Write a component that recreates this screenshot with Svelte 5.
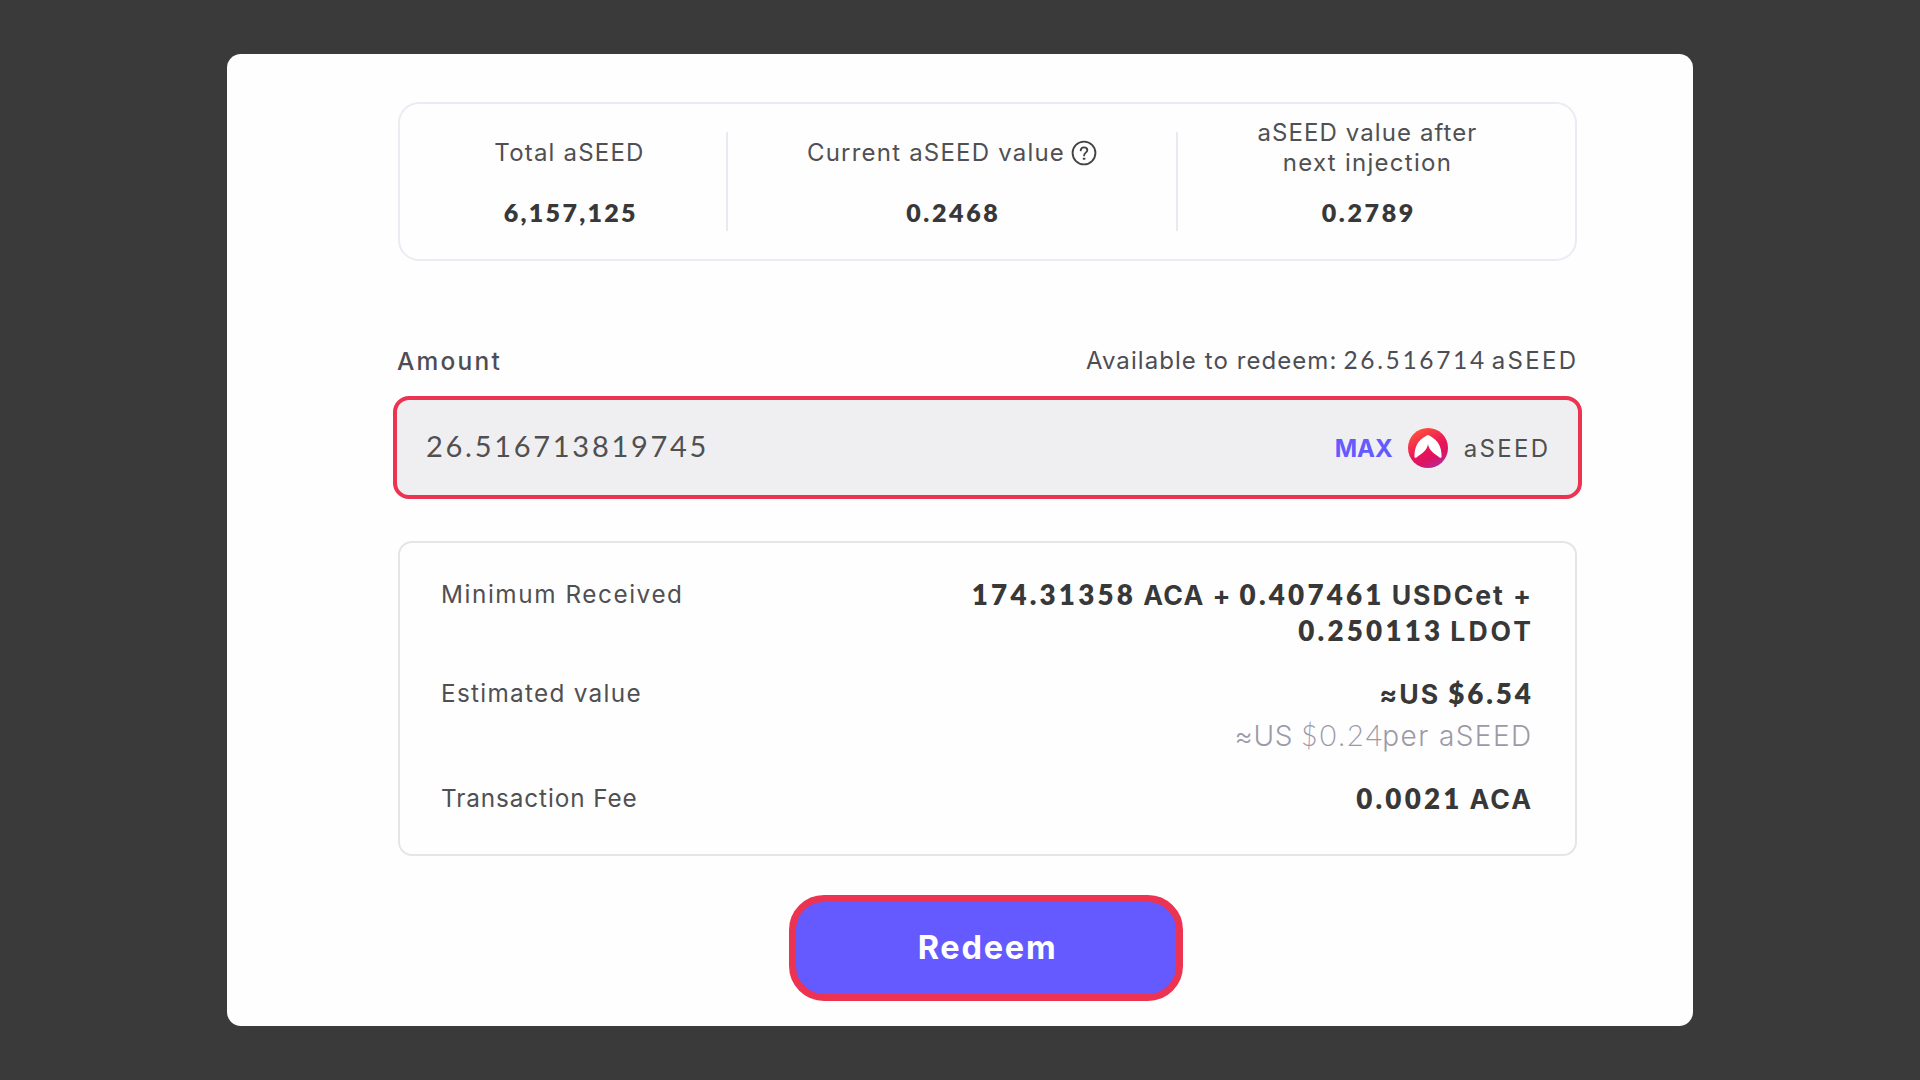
<script>
  const received = [
    [
      { text: '174.31358', kind: 'num' },
      { text: 'ACA +', kind: 'unit tight' },
      { text: '0.407461', kind: 'num' },
      { text: 'USDCet +', kind: 'unit' }
    ],
    [
      { text: '0.250113', kind: 'num' },
      { text: 'LDOT', kind: 'unit wide' }
    ]
  ];
</script>

<main class="page">
  <section class="card">
    <div class="stats">
      <div class="stat">
        <div class="label">Total aSEED</div>
        <div class="value total">6,157,125</div>
      </div>
      <div class="divider"></div>
      <div class="stat">
        <div class="label with-icon">
          <span>Current aSEED value</span>
          <svg class="help" viewBox="0 0 26 26" fill="none" stroke="#444" stroke-width="1.9" stroke-linecap="round">
            <circle cx="13" cy="13" r="11.4" />
            <path d="M9.7 10.4C9.9 8.5 11.2 7.4 13 7.4C14.9 7.4 16.3 8.5 16.3 10.2C16.3 12.6 13.1 12.7 13.1 15.4" />
            <path d="M12.6 18.8h1" />
          </svg>
        </div>
        <div class="value">0.2468</div>
      </div>
      <div class="divider"></div>
      <div class="stat two-line">
        <div class="label after">aSEED value after<br /><span class="next">next injection</span></div>
        <div class="value">0.2789</div>
      </div>
    </div>

    <div class="amount-head">
      <div class="amount">Amount</div>
      <div class="available">
        <span class="redeemable">Available to redeem:</span>
        <span class="balance">26.516714</span>
        <span class="token">aSEED</span>
      </div>
    </div>

    <div class="field">
      <div class="input">26.516713819745</div>
      <div class="asset">
        <span class="max">MAX</span>
        <svg class="logo" viewBox="0 0 40 40">
          <defs>
            <linearGradient id="tokenFill" x1="0.2" y1="0.05" x2="0.72" y2="1">
              <stop offset="0" stop-color="#ff5139" />
              <stop offset="0.55" stop-color="#e8145a" />
              <stop offset="0.75" stop-color="#dc1462" />
              <stop offset="1" stop-color="#b42a9c" />
            </linearGradient>
          </defs>
          <circle cx="20" cy="20" r="20" fill="url(#tokenFill)" />
          <path
            d="M20 7C22.6 8.2 26.8 10.4 29.8 14.4C32.7 18.6 33.6 23.6 33.6 28.4C33.6 30 32.4 30.2 31.2 29.2C26.2 25.2 21.2 23.4 20 16C18.8 23.4 13.8 25.2 8.8 29.2C7.6 30.2 6.4 30 6.4 28.4C6.4 23.6 7.3 18.6 10.2 14.4C13.2 10.4 17.4 8.2 20 7Z"
            fill="#fff"
          />
        </svg>
        <span class="token">aSEED</span>
      </div>
    </div>

    <div class="details">
      <div class="row">
        <div class="name minimum">Minimum Received</div>
        <div class="result">
          {#each received as line}
            <div class="line">
              {#each line as part}
                <span class={part.kind}>{part.text}</span>
              {/each}
            </div>
          {/each}
        </div>
      </div>
      <div class="row">
        <div class="name estimated">Estimated value</div>
        <div class="result">
          <div class="line">
            <span class="unit">≈US</span>
            <span class="num price">$6.54</span>
          </div>
          <div class="line light">
            <span class="approx">≈US</span>
            <span class="rate">$0.24</span>
            <span class="per">per aSEED</span>
          </div>
        </div>
      </div>
      <div class="row">
        <div class="name fee">Transaction Fee</div>
        <div class="result">
          <div class="line">
            <span class="num">0.0021</span>
            <span class="unit">ACA</span>
          </div>
        </div>
      </div>
    </div>

    <button class="redeem"><span>Redeem</span></button>
  </section>
</main>

<style>
  :global(body) {
    margin: 0;
    background: #3a3a3a;
  }
  .page,
  .page * {
    box-sizing: border-box;
  }
  .page {
    height: 1080px;
    padding: 54px 227px;
    font-family: Inter, sans-serif;
    font-size: 24px;
    line-height: 30px;
    color: #505052;
    white-space: nowrap;
  }
  .card {
    height: 972px;
    padding: 48px 116px 0 171px;
    border-radius: 14px;
    background: #fefefe;
  }
  .stats {
    display: flex;
    height: 159px;
    padding: 0 18px 0 13px;
    border: 2px solid #ebebf3;
    border-radius: 21px;
  }
  .divider {
    width: 2px;
    height: 99px;
    margin-top: 28px;
    background: #e9e9f2;
  }
  .stat {
    display: flex;
    flex-direction: column;
    justify-content: flex-end;
    align-items: center;
    gap: 29px;
    width: 313px;
    padding-bottom: 32px;
  }
  .stat:nth-child(3) {
    width: 448px;
  }
  .stat:nth-child(5) {
    width: 379px;
  }
  .two-line {
    gap: 19px;
  }
  .label {
    letter-spacing: 1.2px;
    text-align: center;
  }
  .after {
    letter-spacing: 1.08px;
  }
  .next {
    letter-spacing: 1.27px;
  }
  .with-icon {
    display: flex;
    align-items: center;
    gap: 6px;
  }
  .help {
    width: 26px;
    height: 26px;
  }
  .value {
    font-family: Lato, sans-serif;
    font-size: 25px;
    font-weight: 800;
    letter-spacing: 2.6px;
    margin-right: -2.6px;
    color: #383838;
  }
  .total {
    letter-spacing: 2.3px;
  }
  .amount-head {
    display: flex;
    justify-content: space-between;
    height: 30px;
    margin-top: 84px;
    color: #4d4d54;
  }
  .amount {
    padding-top: 1px;
    font-size: 24.5px;
    font-weight: 500;
    letter-spacing: 2.2px;
    margin-left: -1px;
  }
  .available {
    display: flex;
    align-items: baseline;
    gap: 7px;
    margin-right: 1px;
  }
  .redeemable {
    letter-spacing: 1.07px;
    margin-right: -1px;
  }
  .balance {
    font-family: Lato, sans-serif;
    font-size: 24.5px;
    letter-spacing: 2.65px;
    margin-right: -2px;
  }
  .token {
    letter-spacing: 2.3px;
    margin-right: -2.3px;
  }
  .field {
    display: flex;
    justify-content: space-between;
    align-items: center;
    width: 1189px;
    height: 103px;
    margin: 21px 0 0 -5px;
    padding: 0 30px 0 29px;
    border: 4px solid #ec3352;
    border-radius: 16px;
    background: #efeff1;
  }
  .input {
    padding-bottom: 3px;
    font-family: Lato, sans-serif;
    font-size: 29px;
    letter-spacing: 2.72px;
  }
  .asset {
    display: flex;
    align-items: center;
    gap: 15.5px;
    padding-top: 1px;
  }
  .asset span {
    padding-top: 2px;
  }
  .max {
    font-weight: 700;
    color: #645aff;
  }
  .logo {
    width: 40px;
    height: 40px;
  }
  .details {
    display: flex;
    flex-direction: column;
    gap: 28px;
    height: 315px;
    margin-top: 42px;
    padding: 34px 44px 0 41px;
    border: 2px solid #e5e5e6;
    border-radius: 14px;
  }
  .row {
    display: flex;
    justify-content: space-between;
  }
  .name {
    padding-top: 2px;
    font-size: 24.3px;
  }
  .minimum {
    letter-spacing: 1.57px;
  }
  .estimated {
    letter-spacing: 1.3px;
  }
  .fee {
    letter-spacing: 0.9px;
  }
  .line {
    display: flex;
    justify-content: flex-end;
    align-items: baseline;
    gap: 10.2px;
    height: 35.5px;
    line-height: 35px;
    color: #383838;
  }
  .num {
    font-family: Lato, sans-serif;
    font-size: 27.8px;
    font-weight: 800;
    letter-spacing: 3.2px;
    margin-right: -3.2px;
  }
  .price {
    letter-spacing: 2.9px;
    margin-right: -2.9px;
  }
  .unit {
    font-size: 26.6px;
    font-weight: 700;
    letter-spacing: 1.95px;
    margin-right: -2px;
  }
  .tight {
    letter-spacing: 1.35px;
    margin-right: -2.4px;
  }
  .wide {
    letter-spacing: 3px;
    margin-right: -3px;
  }
  .light {
    gap: 8px;
    margin-top: 6px;
    font-size: 28px;
    font-weight: 300;
    color: #9c9aa8;
  }
  .approx {
    letter-spacing: 0.7px;
  }
  .rate {
    font-family: Lato, sans-serif;
    font-size: 28.5px;
    letter-spacing: 2.09px;
  }
  .per {
    letter-spacing: 1.4px;
    margin: 0 -1.5px 0 -10px;
  }
  .redeem {
    display: flex;
    align-items: center;
    justify-content: center;
    width: 394px;
    height: 106px;
    margin: 39px 0 0 391px;
    padding: 0 0 2px 3px;
    border: 7px solid #ec3352;
    border-radius: 35px;
    background: #655aff;
    color: #fff;
    font-family: Inter, sans-serif;
    font-size: 32.5px;
    font-weight: 700;
    letter-spacing: 1.75px;
  }
</style>
